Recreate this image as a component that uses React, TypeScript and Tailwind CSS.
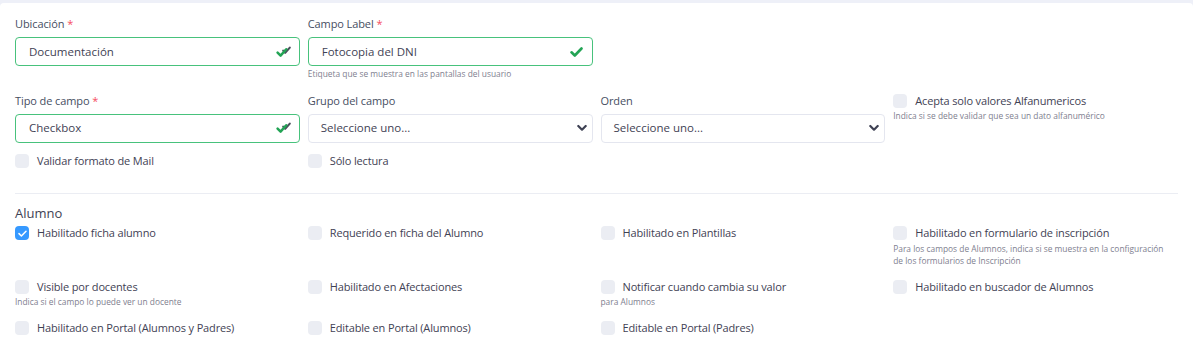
import React from "react";

const FONT = "font-['Open_Sans',sans-serif]";

function DoubleCheck() {
  return (
    <svg width="16" height="12" viewBox="0 0 16 12" className="absolute right-[7px] top-1/2 -translate-y-1/2">
      <path d="M7.2 4.6 L9.2 6.8 L13.8 1.6" stroke="#4b4f5c" strokeWidth="2.1" fill="none" strokeLinecap="round" strokeLinejoin="round" />
      <path d="M1.6 6.6 L4.6 9.6 L10.2 3.2" stroke="#23a455" strokeWidth="2.5" fill="none" strokeLinecap="round" strokeLinejoin="round" />
    </svg>
  );
}

function SingleCheck() {
  return (
    <svg width="13" height="11" viewBox="0 0 13 11" className="absolute right-[9px] top-1/2 -translate-y-1/2">
      <path d="M1.5 5.8 L4.8 9 L11.5 2" stroke="#23a455" strokeWidth="2.6" fill="none" strokeLinecap="round" strokeLinejoin="round" />
    </svg>
  );
}

function Chevron() {
  return (
    <svg width="10" height="7" viewBox="0 0 10 7" className="absolute right-[5px] top-1/2 -translate-y-1/2">
      <path d="M1.3 1.5 L5 5.2 L8.7 1.5" stroke="#3f4254" strokeWidth="2.2" fill="none" strokeLinecap="round" strokeLinejoin="round" />
    </svg>
  );
}

function Label({ text, required }: { text: string; required?: boolean }) {
  return (
    <div className="h-[16px] leading-[16px] text-[11px] tracking-[-0.1px] text-[#464e5f] mb-[5px]">
      {text}
      {required && <span className="text-[#f64e60]"> *</span>}
    </div>
  );
}

function ValidInput({ value, double }: { value: string; double?: boolean }) {
  return (
    <div className="relative h-[29px] rounded-[4px] border border-[#48c27c] pl-[13px] flex items-center text-[11.5px] text-[#3f4254]">
      {value}
      {double ? <DoubleCheck /> : <SingleCheck />}
    </div>
  );
}

function SelectBox() {
  return (
    <div className="relative h-[29px] rounded-[4px] border border-[#e4e6ef] pl-[12px] flex items-center text-[11.5px] text-[#3f4254]">
      Seleccione uno...
      <Chevron />
    </div>
  );
}

function Help({ children }: { children: React.ReactNode }) {
  return <div className="mt-[1.5px] text-[8.4px] leading-[12.3px] text-[#80808f]">{children}</div>;
}

function Check({ text, checked, help }: { text: string; checked?: boolean; help?: React.ReactNode }) {
  return (
    <div>
      <div className="flex items-center h-[16px]">
        {checked ? (
          <span className="w-[14px] h-[14px] rounded-[4px] bg-[#3699ff] flex items-center justify-center shrink-0">
            <svg width="9" height="7" viewBox="0 0 9 7">
              <path d="M1 3.6 L3.4 6 L8 1.2" stroke="white" strokeWidth="1.5" fill="none" strokeLinecap="round" strokeLinejoin="round" />
            </svg>
          </span>
        ) : (
          <span className="w-[14px] h-[14px] rounded-[4px] bg-[#ebedf3] shrink-0" />
        )}
        <span className="ml-[8px] text-[11px] tracking-[-0.15px] leading-[16px] text-[#3f4254]">{text}</span>
      </div>
      {help && <Help>{help}</Help>}
    </div>
  );
}

export default function App() {
  return (
    <div className={`min-h-screen bg-[#eef0f8] pt-[3px] ${FONT}`}>
      <div className="bg-white rounded-t-[4px] px-[15px] pt-[13.3px] pb-[20px] min-h-[356px]">
        <div className="grid grid-cols-4 gap-x-2">
          <div>
            <Label text="Ubicación" required />
            <ValidInput value="Documentación" double />
          </div>
          <div>
            <Label text="Campo Label" required />
            <ValidInput value="Fotocopia del DNI" />
            <Help>Etiqueta que se muestra en las pantallas del usuario</Help>
          </div>
        </div>

        <div className="grid grid-cols-4 gap-x-2 mt-[12.5px]">
          <div>
            <Label text="Tipo de campo" required />
            <ValidInput value="Checkbox" double />
          </div>
          <div>
            <Label text="Grupo del campo" />
            <SelectBox />
          </div>
          <div>
            <Label text="Orden" />
            <SelectBox />
          </div>
          <div>
            <Check text="Acepta solo valores Alfanumericos" help="Indica si se debe validar que sea un dato alfanumérico" />
          </div>
        </div>

        <div className="grid grid-cols-4 gap-x-2 mt-[10.5px]">
          <Check text="Validar formato de Mail" />
          <Check text="Sólo lectura" />
        </div>

        <div className="mt-[23.5px] h-px bg-[#ebedf3]" />

        <div className="mt-[9px] text-[13px] leading-[20px] text-[#3f4254]">Alumno</div>

        <div className="grid grid-cols-4 gap-x-2 gap-y-[11.3px] mt-[2.7px]">
          <Check text="Habilitado ficha alumno" checked />
          <Check text="Requerido en ficha del Alumno" />
          <Check text="Habilitado en Plantillas" />
          <Check
            text="Habilitado en formulario de inscripción"
            help={
              <>
                Para los campos de Alumnos, indica si se muestra en la configuración
                <br />
                de los formularios de Inscripción
              </>
            }
          />
          <Check text="Visible por docentes" help="Indica si el campo lo puede ver un docente" />
          <Check text="Habilitado en Afectaciones" />
          <Check text="Notificar cuando cambia su valor" help="para Alumnos" />
          <Check text="Habilitado en buscador de Alumnos" />
          <Check text="Habilitado en Portal (Alumnos y Padres)" />
          <Check text="Editable en Portal (Alumnos)" />
          <Check text="Editable en Portal (Padres)" />
        </div>
      </div>
    </div>
  );
}
